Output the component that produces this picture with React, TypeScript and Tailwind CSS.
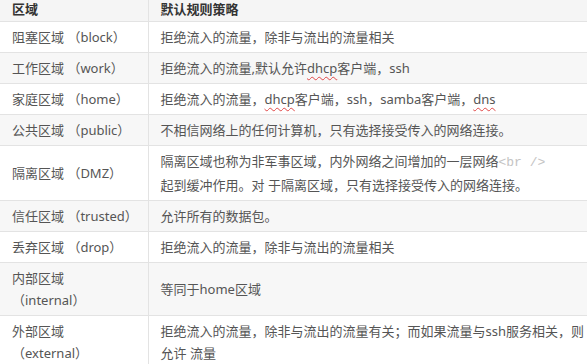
import React from "react";

const Sp = ({ children }: { children: React.ReactNode }) => (
  <span className="underline decoration-wavy decoration-[#e04848] decoration-1 underline-offset-[3px]">{children}</span>
);

type Row = { zone: React.ReactNode; rule: React.ReactNode };

const rows: Row[] = [
  { zone: "阻塞区域 （block）", rule: "拒绝流入的流量，除非与流出的流量相关" },
  { zone: "工作区域 （work）", rule: <>拒绝流入的流量,默认允许<Sp>dhcp</Sp>客户端，ssh</> },
  { zone: "家庭区域 （home）", rule: <>拒绝流入的流量，<Sp>dhcp</Sp>客户端，ssh，samba客户端，<Sp>dns</Sp></> },
  { zone: "公共区域 （public）", rule: "不相信网络上的任何计算机，只有选择接受传入的网络连接。" },
  {
    zone: "隔离区域 （DMZ）",
    rule: (
      <>
        隔离区域也称为非军事区域，内外网络之间增加的一层网络
        <span className="text-[#c4c4c4] font-['Liberation_Mono',monospace]">&lt;br /&gt;</span>
        <br />
        起到缓冲作用。对 于隔离区域，只有选择接受传入的网络连接。
      </>
    ),
  },
  { zone: "信任区域 （trusted）", rule: "允许所有的数据包。" },
  { zone: "丢弃区域 （drop）", rule: "拒绝流入的流量，除非与流出的流量相关" },
  { zone: <>内部区域<br />（internal）</>, rule: "等同于home区域" },
  {
    zone: <>外部区域<br />（external）</>,
    rule: <>拒绝流入的流量，除非与流出的流量有关；而如果流量与ssh服务相关，则<br />允许 流量</>,
  },
];

export default function App() {
  return (
    <div className="w-[587px] h-[364px] overflow-hidden bg-white font-['Noto_Sans','Noto_Sans_CJK_SC',sans-serif] text-[13px] text-[#555]">
      <table className="w-[600px] border-collapse table-fixed">
        <colgroup>
          <col className="w-[148px]" />
          <col />
        </colgroup>
        <thead>
          <tr className="bg-[#f5f5f5]">
            <th className="border-b border-r border-[#e3e3e3] px-3 pt-0 pb-[3px] leading-[18px] text-left font-bold text-[#333]">区域</th>
            <th className="border-b border-[#e3e3e3] px-3 pt-0 pb-[3px] leading-[18px] text-left font-bold text-[#333]">默认规则策略</th>
          </tr>
        </thead>
        <tbody>
          {rows.map((r, i) => (
            <tr key={i} className={i % 2 === 1 ? "bg-[#f7f7f7]" : "bg-white"}>
              <td className="border-b border-r border-[#e3e3e3] px-3 py-1 leading-[22px] align-middle">{r.zone}</td>
              <td className="border-b border-[#e3e3e3] px-3 py-1 leading-[22px] align-middle whitespace-nowrap">{r.rule}</td>
            </tr>
          ))}
        </tbody>
      </table>
    </div>
  );
}
